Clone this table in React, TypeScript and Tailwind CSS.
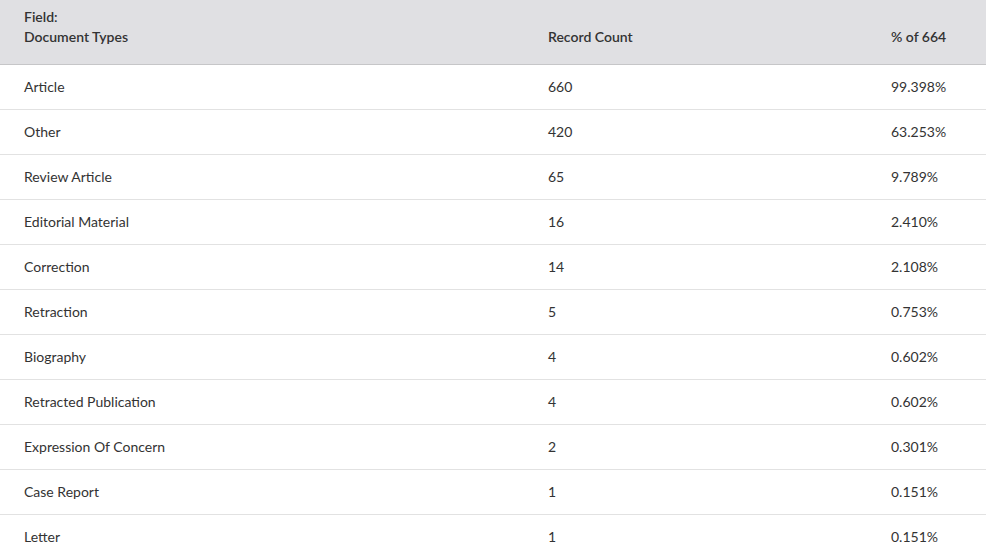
const rows: [string, string, string][] = [
  ['Article', '660', '99.398%'],
  ['Other', '420', '63.253%'],
  ['Review Article', '65', '9.789%'],
  ['Editorial Material', '16', '2.410%'],
  ['Correction', '14', '2.108%'],
  ['Retraction', '5', '0.753%'],
  ['Biography', '4', '0.602%'],
  ['Retracted Publication', '4', '0.602%'],
  ['Expression Of Concern', '2', '0.301%'],
  ['Case Report', '1', '0.151%'],
  ['Letter', '1', '0.151%'],
];

export default function App() {
  return (
    <div className="w-[986px] h-[557px] overflow-hidden bg-white text-[14px] text-[#333] font-['Lato',sans-serif]">
      <div className="grid grid-cols-[524px_343px_1fr] bg-[#e0e0e3] border-b border-[#c6c6c8] h-[65px] font-semibold items-end pb-[17px]">
        <div className="px-6 leading-[20px]">
          Field:
          <br />
          Document Types
        </div>
        <div className="px-6 leading-[20px]">Record Count</div>
        <div className="px-6 leading-[20px]">% of 664</div>
      </div>
      {rows.map(([name, count, pct]) => (
        <div
          key={name}
          className="grid grid-cols-[524px_343px_1fr] h-[45px] pb-[2px] border-b border-[#e2e2e2] items-center"
        >
          <div className="px-6">{name}</div>
          <div className="px-6">{count}</div>
          <div className="px-6">{pct}</div>
        </div>
      ))}
    </div>
  );
}
